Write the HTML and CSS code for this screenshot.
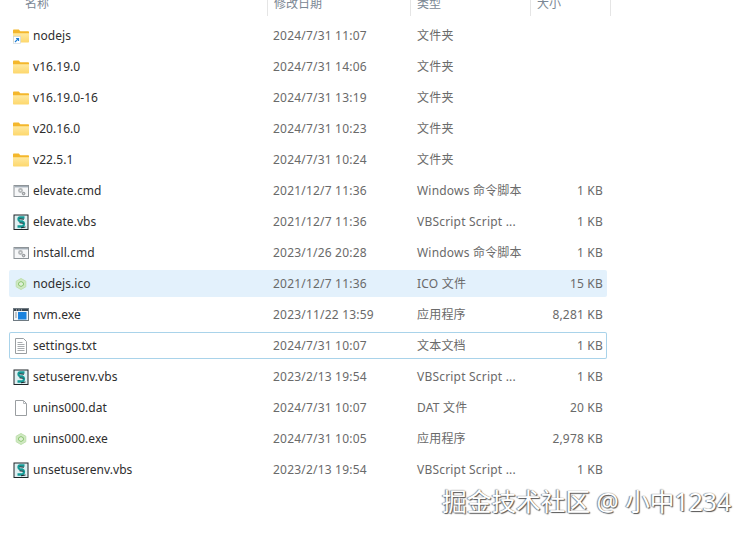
FILE: index.html
```html
<!DOCTYPE html>
<html lang="zh">
<head>
<meta charset="utf-8">
<title>nvm</title>
<link rel="stylesheet" href="styles.css">
</head>
<body>
<svg class="defs" width="0" height="0" aria-hidden="true">
  <defs>
    <linearGradient id="fg" x1="0" y1="0" x2="0" y2="1"><stop offset="0" stop-color="#ffe9a0"/><stop offset="1" stop-color="#fdd76c"/></linearGradient>
    <symbol id="folder" viewBox="0 0 16 16">
      <path d="M0 2.500C0 2 .4 1.500 1 1.500h4.800l1.500 1.800h7.700c.6 0 1 .4 1 1v1.700H0z" fill="#f4b72c"/>
      <path d="M0 5.200h16v8.300c0 .6-.4 1-1 1H1c-.6 0-1-.4-1-1z" fill="url(#fg)"/>
    </symbol>
    <symbol id="shortcut" viewBox="0 0 16 16">
      <use href="#folder"/>
      <rect x=".5" y="8.500" width="7" height="7" fill="#fff" stroke="#c6d3dc" stroke-width=".6"/>
      <path d="M2 14 5.300 10.700M3.100 10.500H5.500V12.900" fill="none" stroke="#1f7fd6" stroke-width="1.200"/>
    </symbol>
    <symbol id="cmd" viewBox="0 0 16 16">
      <rect x="1" y="2.500" width="14.500" height="11" fill="#f6f7f8" stroke="#8e9498"/>
      <rect x="1.500" y="3" width="13.500" height="1.400" fill="#a3adb6"/>
      <circle cx="7.500" cy="7.500" r="2.400" fill="#b2b5b7"/>
      <circle cx="7.500" cy="7.500" r=".8" fill="#eceeef"/>
      <circle cx="10.600" cy="10.600" r="1.800" fill="#9b9ea1"/>
      <circle cx="10.600" cy="10.600" r=".6" fill="#e4e6e7"/>
    </symbol>
    <symbol id="vbs" viewBox="0 0 16 16">
      <rect x="1" y="1" width="14" height="14.500" fill="#dff0f2" stroke="#1f2528"/>
      <path d="M11.500 3.500H7C5 3.500 5 7 7 7.500H9.500C11.500 8 11.500 11.500 9.500 12.500H4.500" fill="none" stroke="#149a96" stroke-width="2.300"/>
      <path d="M11 5.200 6.500 4.800M10.500 9.300 6.500 8.800M8 13.800 12.500 13" stroke="#1a2a30" stroke-width="1"/>
    </symbol>
    <symbol id="node" viewBox="0 0 16 16">
      <path d="M8 2.500 12.800 5.200V10.800L8 13.500 3.200 10.800V5.200z" fill="#cfe8c1" stroke="#bfe0ae"/>
      <path d="M8 5.500 10.400 6.800V9.200L8 10.500 5.600 9.200V6.800z" fill="#dff0d6" stroke="#8cc672"/>
    </symbol>
    <symbol id="exe" viewBox="0 0 16 16">
      <rect x=".5" y="1.500" width="15" height="12" fill="#f2f5f7" stroke="#6f7a82"/>
      <rect x="1" y="2" width="14" height="2" fill="#39454f"/>
      <path d="M3 3h1M5.500 3h1M8 3h1" stroke="#dfe4e8"/>
      <rect x="5" y="5" width="8.500" height="7.500" fill="#1b83de"/>
      <path d="M2 6h2M2 8h2M2 10h2" stroke="#8a949b"/>
    </symbol>
    <symbol id="txt" viewBox="0 0 16 16">
      <path d="M2.500.5H10.500L13.500 3.500V15.500H2.500z" fill="#fff" stroke="#9a9ea1"/>
      <path d="M4.500 4.500h5M4.500 6.500h7M4.500 8.500h7M4.500 10.500h7M4.500 12.500h7" stroke="#a8acaf"/>
    </symbol>
    <symbol id="dat" viewBox="0 0 16 16">
      <path d="M2.500.5H10.500L13.500 3.500V15.500H2.500z" fill="#fff" stroke="#9a9ea1"/>
      <path d="M10.500.5V3.500H13.500" fill="none" stroke="#b4b7ba"/>
    </symbol>
  </defs>
</svg>
<main class="list">
  <header class="head">
    <div class="h-cell h-name">名称</div>
    <div class="h-cell h-date">修改日期</div>
    <div class="h-cell h-type">类型</div>
    <div class="h-cell h-size">大小</div>
  </header>
  <section class="rows">
    <div class="row"><svg class="ico"><use href="#shortcut"/></svg><span class="name">nodejs</span><span class="date">2024/7/31 11:07</span><span class="type">文件夹</span><span class="size"></span></div>
    <div class="row"><svg class="ico"><use href="#folder"/></svg><span class="name">v16.19.0</span><span class="date">2024/7/31 14:06</span><span class="type">文件夹</span><span class="size"></span></div>
    <div class="row"><svg class="ico"><use href="#folder"/></svg><span class="name">v16.19.0-16</span><span class="date">2024/7/31 13:19</span><span class="type">文件夹</span><span class="size"></span></div>
    <div class="row"><svg class="ico"><use href="#folder"/></svg><span class="name">v20.16.0</span><span class="date">2024/7/31 10:23</span><span class="type">文件夹</span><span class="size"></span></div>
    <div class="row"><svg class="ico"><use href="#folder"/></svg><span class="name">v22.5.1</span><span class="date">2024/7/31 10:24</span><span class="type">文件夹</span><span class="size"></span></div>
    <div class="row"><svg class="ico"><use href="#cmd"/></svg><span class="name">elevate.cmd</span><span class="date">2021/12/7 11:36</span><span class="type">Windows 命令脚本</span><span class="size">1 KB</span></div>
    <div class="row"><svg class="ico"><use href="#vbs"/></svg><span class="name">elevate.vbs</span><span class="date">2021/12/7 11:36</span><span class="type">VBScript Script ...</span><span class="size">1 KB</span></div>
    <div class="row"><svg class="ico"><use href="#cmd"/></svg><span class="name">install.cmd</span><span class="date">2023/1/26 20:28</span><span class="type">Windows 命令脚本</span><span class="size">1 KB</span></div>
    <div class="row hover"><svg class="ico"><use href="#node"/></svg><span class="name">nodejs.ico</span><span class="date">2021/12/7 11:36</span><span class="type">ICO 文件</span><span class="size">15 KB</span></div>
    <div class="row"><svg class="ico"><use href="#exe"/></svg><span class="name">nvm.exe</span><span class="date">2023/11/22 13:59</span><span class="type">应用程序</span><span class="size">8,281 KB</span></div>
    <div class="row focus"><svg class="ico"><use href="#txt"/></svg><span class="name">settings.txt</span><span class="date">2024/7/31 10:07</span><span class="type">文本文档</span><span class="size">1 KB</span></div>
    <div class="row"><svg class="ico"><use href="#vbs"/></svg><span class="name">setuserenv.vbs</span><span class="date">2023/2/13 19:54</span><span class="type">VBScript Script ...</span><span class="size">1 KB</span></div>
    <div class="row"><svg class="ico"><use href="#dat"/></svg><span class="name">unins000.dat</span><span class="date">2024/7/31 10:07</span><span class="type">DAT 文件</span><span class="size">20 KB</span></div>
    <div class="row"><svg class="ico"><use href="#node"/></svg><span class="name">unins000.exe</span><span class="date">2024/7/31 10:05</span><span class="type">应用程序</span><span class="size">2,978 KB</span></div>
    <div class="row"><svg class="ico"><use href="#vbs"/></svg><span class="name">unsetuserenv.vbs</span><span class="date">2023/2/13 19:54</span><span class="type">VBScript Script ...</span><span class="size">1 KB</span></div>
  </section>
</main>
<div class="mark">掘金技术社区 @ 小中1234</div>
</body>
</html>
```
FILE: styles.css
```css
html, body { margin: 0; padding: 0; background: #fff; }
body {
  width: 749px;
  height: 534px;
  overflow: hidden;
  position: relative;
  font-family: "Noto Sans", "Noto Sans CJK SC", sans-serif;
  font-size: 12px;
  color: #6a6a6a;
}
.defs { position: absolute; }
.list { padding-left: 9px; width: 602px; }
.head { display: flex; height: 16px; overflow: hidden; }
.h-cell { box-sizing: border-box; line-height: 8px; color: #7b8794; border-right: 1px solid #e5e5e5; padding-left: 6px; }
.h-name { width: 259px; padding-left: 16px; }
.h-date { width: 143px; }
.h-type { width: 120px; }
.h-size { width: 80px; }
.rows { display: flex; flex-direction: column; gap: 4px; padding-top: 6px; }
.row {
  box-sizing: border-box;
  display: flex;
  align-items: center;
  height: 27px;
  width: 598px;
  padding-left: 4px;
  border-radius: 2px;
  line-height: 16px;
}
.hover { background: #e3f1fc; }
.focus { background: #fff; box-shadow: inset 0 0 0 1px #a9d3ea; }
.ico { width: 16px; height: 16px; flex: none; }
.name { width: 240px; margin-left: 4px; color: #2e2e2e; letter-spacing: .05px; }
.date { width: 144px; letter-spacing: .2px; }
.type { width: 130px; letter-spacing: .2px; white-space: nowrap; }
.size { width: 56px; text-align: right; letter-spacing: .2px; }
.mark {
  position: absolute;
  left: 442px;
  top: 486px;
  font-size: 24.7px;
  line-height: 32px;
  white-space: nowrap;
  color: #fff;
  text-shadow: 1px 1px 1px #555, -1px 0 1px #8a8a8a, 0 0 1px #777;
}
```
